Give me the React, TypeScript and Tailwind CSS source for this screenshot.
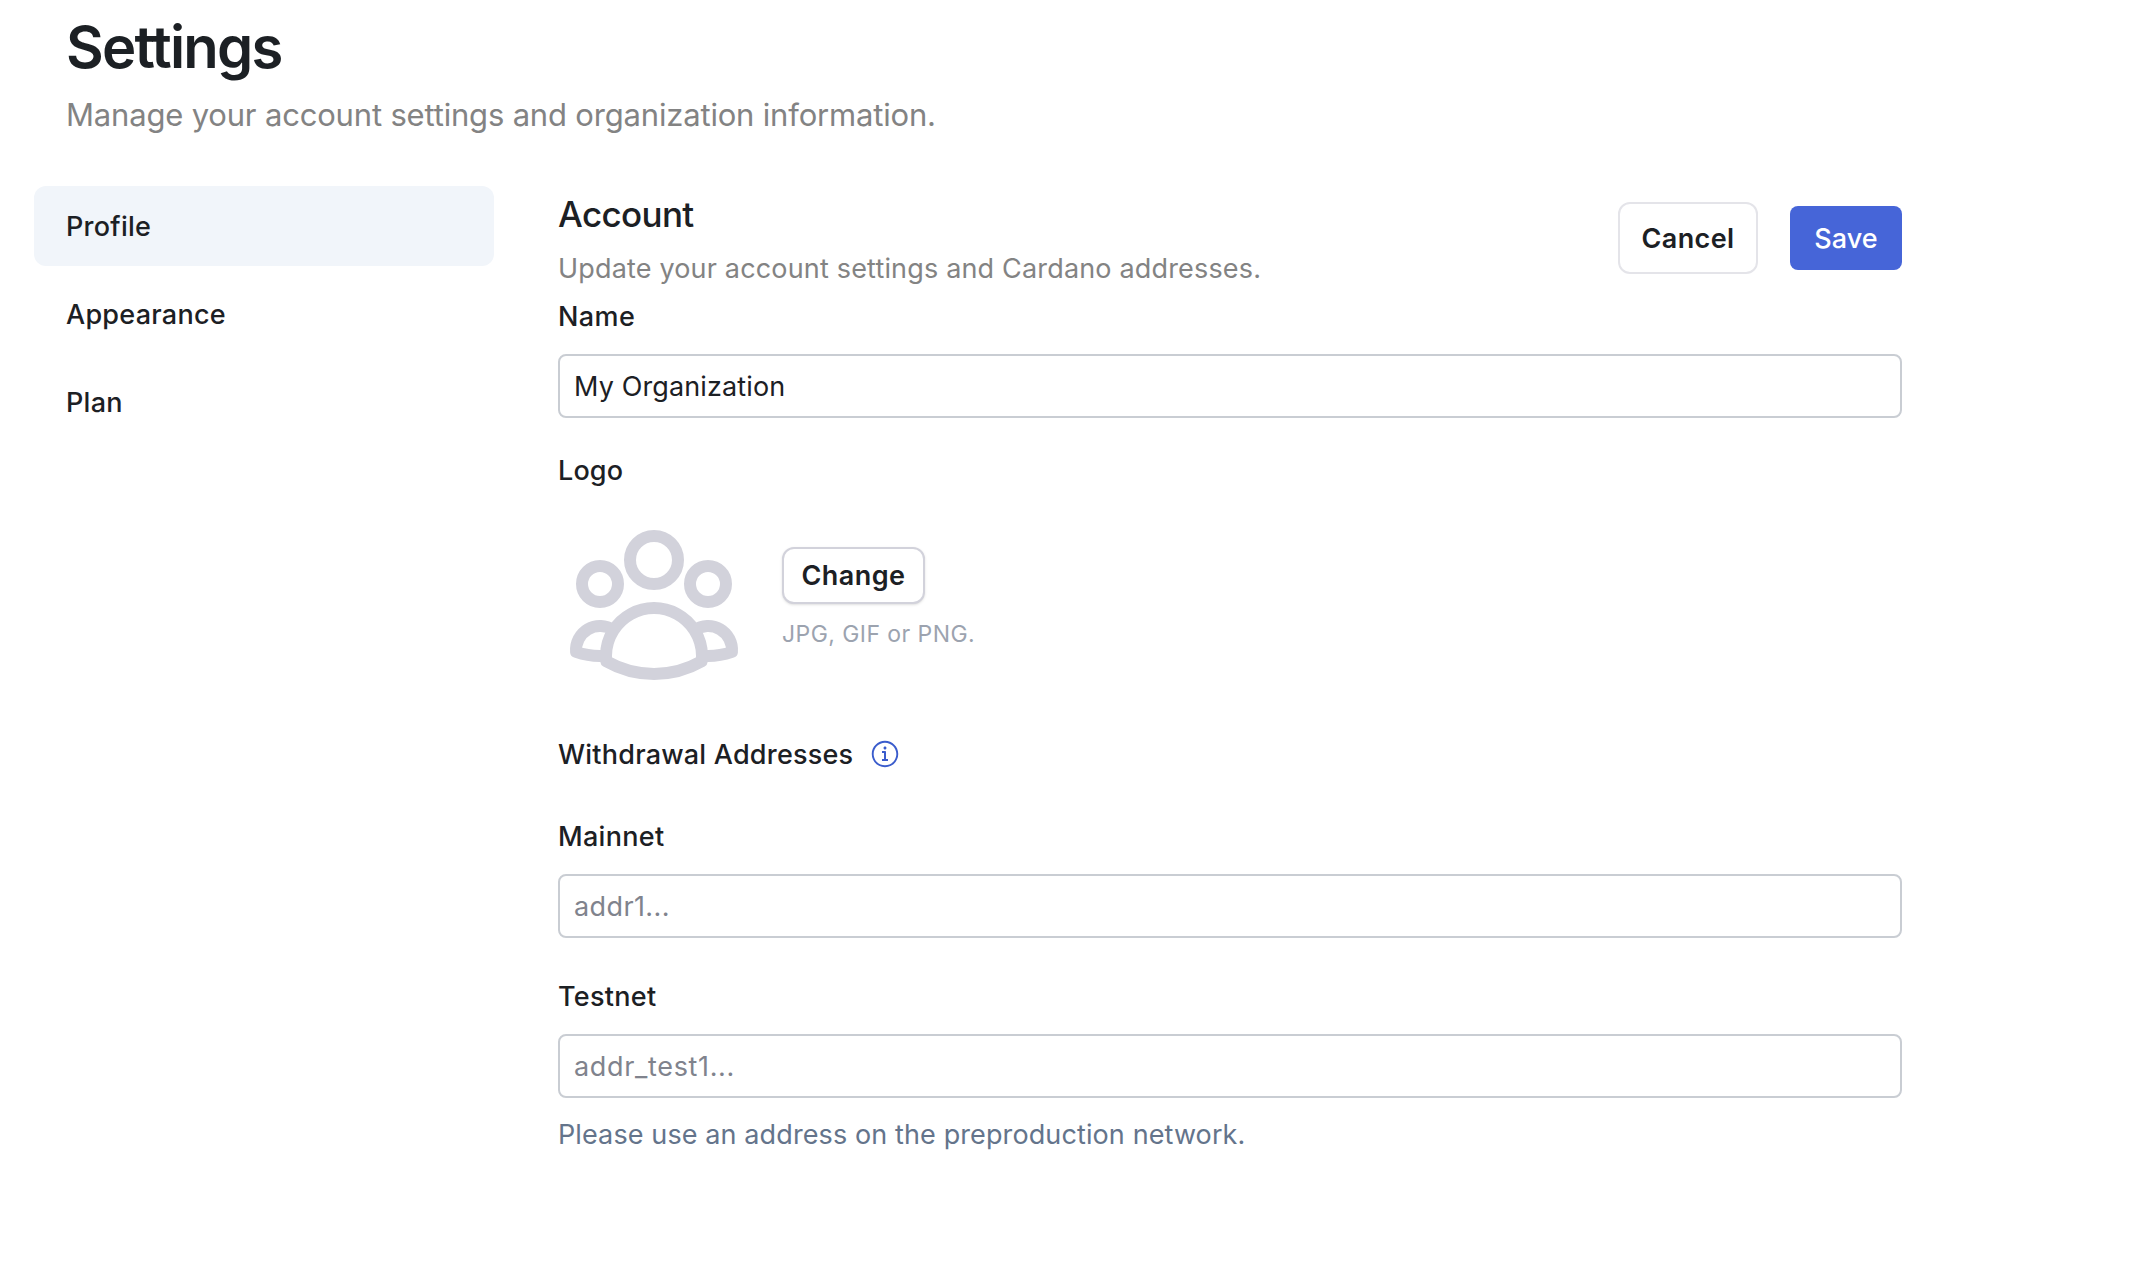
import React from "react";

const navItems = [
  { label: "Profile", active: true },
  { label: "Appearance", active: false },
  { label: "Plan", active: false },
];

const inputClass =
  "mt-[18px] block h-16 w-full rounded-lg border-2 border-[#c9cdd3] bg-white px-3.5 text-[27px] text-[#1c2024] placeholder:text-[#80838d] placeholder:opacity-100 outline-none";

const labelClass = "block h-10 text-[27px] leading-[42px] font-medium";

function UserGroupIcon() {
  return (
    <svg
      className="size-48 text-[#d2d2db]"
      viewBox="0 0 24 24"
      fill="none"
      stroke="currentColor"
      strokeWidth="1.5"
      strokeLinecap="round"
      strokeLinejoin="round"
    >
      <path d="M18 18.72a9.094 9.094 0 0 0 3.741-.479 3 3 0 0 0-4.682-2.72m.94 3.198.001.031c0 .225-.012.447-.037.666A11.944 11.944 0 0 1 12 21c-2.17 0-4.207-.576-5.963-1.584A6.062 6.062 0 0 1 6 18.719m12 0a5.971 5.971 0 0 0-.941-3.197m0 0A5.995 5.995 0 0 0 12 12.75a5.995 5.995 0 0 0-5.058 2.772m0 0a3 3 0 0 0-4.681 2.72 8.986 8.986 0 0 0 3.74.477m.94-3.197a5.971 5.971 0 0 0-.94 3.197M15 6.75a3 3 0 1 1-6 0 3 3 0 0 1 6 0Zm6 3a2.25 2.25 0 1 1-4.5 0 2.25 2.25 0 0 1 4.5 0Zm-13.5 0a2.25 2.25 0 1 1-4.5 0 2.25 2.25 0 0 1 4.5 0Z" />
    </svg>
  );
}

function InfoIcon() {
  return (
    <svg className="size-[30px] text-[#3a5ccc]" viewBox="0 0 15 15" fill="currentColor">
      <path
        fillRule="evenodd"
        clipRule="evenodd"
        d="M7.49991 0.876892C3.84222 0.876892 0.877075 3.84204 0.877075 7.49972C0.877075 11.1574 3.84222 14.1226 7.49991 14.1226C11.1576 14.1226 14.1227 11.1574 14.1227 7.49972C14.1227 3.84204 11.1576 0.876892 7.49991 0.876892ZM1.82707 7.49972C1.82707 4.36671 4.36689 1.82689 7.49991 1.82689C10.6329 1.82689 13.1727 4.36671 13.1727 7.49972C13.1727 10.6327 10.6329 13.1725 7.49991 13.1725C4.36689 13.1725 1.82707 10.6327 1.82707 7.49972ZM8.24992 4.49999C8.24992 4.9142 7.91413 5.24999 7.49992 5.24999C7.08571 5.24999 6.74992 4.9142 6.74992 4.49999C6.74992 4.08577 7.08571 3.74999 7.49992 3.74999C7.91413 3.74999 8.24992 4.08577 8.24992 4.49999ZM6.00003 5.99999H6.50003H7.50003C7.77618 5.99999 8.00003 6.22384 8.00003 6.49999V9.99999H8.50003H9.00003V11H8.50003H7.50003H6.50003H6.00003V9.99999H6.50003H7.00003V6.99999H6.50003H6.00003V5.99999Z"
      />
    </svg>
  );
}

export default function App() {
  return (
    <div className="min-h-screen bg-white pt-[11px] font-['Inter',sans-serif] text-[#1c2024]">
      <header className="pl-[66px]">
        <h1 className="h-[72px] text-[58px] leading-[72px] font-semibold tracking-[-1.8px]">Settings</h1>
        <p className="mt-2 h-12 text-[31px] leading-[48px] tracking-[-0.18px] text-[#838383]">
          Manage your account settings and organization information.
        </p>
      </header>

      <div className="mt-[47px] flex">
        <nav className="ml-[34px] flex w-[460px] flex-col gap-2">
          {navItems.map((item) => (
            <a
              key={item.label}
              className={`flex h-20 items-center rounded-xl pt-0.5 pl-8 text-[27px] font-medium tracking-[0.26px] ${
                item.active ? "bg-[#f1f5fa]" : ""
              }`}
            >
              {item.label}
            </a>
          ))}
        </nav>

        <main className="ml-16 w-[1344px]">
          <div className="flex h-[110px] justify-between">
            <div>
              <h2 className="mt-2 h-10 text-[35px] leading-10 font-medium tracking-[-0.65px]">Account</h2>
              <p className="mt-3.5 h-10 text-[27px] leading-[42px] tracking-[0.17px] text-[#838383]">
                Update your account settings and Cardano addresses.
              </p>
            </div>
            <div className="flex items-center gap-8 pb-[6px]">
              <button className="h-[72px] w-[140px] rounded-xl border-2 border-[#e4e4e9] bg-white pt-0.5 text-[27px] font-semibold tracking-[0.38px]">
                Cancel
              </button>
              <button className="h-16 w-28 rounded-lg bg-[#4665d8] pt-0.5 text-[27px] font-medium tracking-[0.05px] text-white">
                Save
              </button>
            </div>
          </div>

          <label className={`${labelClass} tracking-[0.42px]`}>Name</label>
          <input className={`${inputClass} tracking-[0.13px]`} defaultValue="My Organization" />

          <label className={`${labelClass} mt-8 tracking-[0.15px]`}>Logo</label>
          <div className="mt-4 flex h-48 items-center gap-8">
            <UserGroupIcon />
            <div className="mb-[7px]">
              <button className="block h-[57px] w-[143px] rounded-xl border-2 border-[#d2d2db] bg-white pt-0.5 text-[27px] font-semibold tracking-[0.43px] shadow-sm">
                Change
              </button>
              <p className="mt-3.5 h-8 text-[23px] leading-8 tracking-[0.43px] text-[#9ca3af]">JPG, GIF or PNG.</p>
            </div>
          </div>

          <div className="mt-9 flex h-10 items-center gap-[17px]">
            <h3 className="text-[27px] leading-[40px] pt-0.5 font-medium tracking-[0.22px]">Withdrawal Addresses</h3>
            <InfoIcon />
          </div>

          <label className={`${labelClass} mt-[42px] tracking-[0.31px]`}>Mainnet</label>
          <input className={`${inputClass} tracking-[0.4px]`} placeholder="addr1..." />

          <label className={`${labelClass} mt-[38px] tracking-[0.3px]`}>Testnet</label>
          <input className={`${inputClass} tracking-[0.66px]`} placeholder="addr_test1..." />

          <p className="mt-4 h-10 text-[27px] leading-[42px] tracking-[0.11px] text-[#64748b]">
            Please use an address on the preproduction network.
          </p>
        </main>
      </div>
    </div>
  );
}
